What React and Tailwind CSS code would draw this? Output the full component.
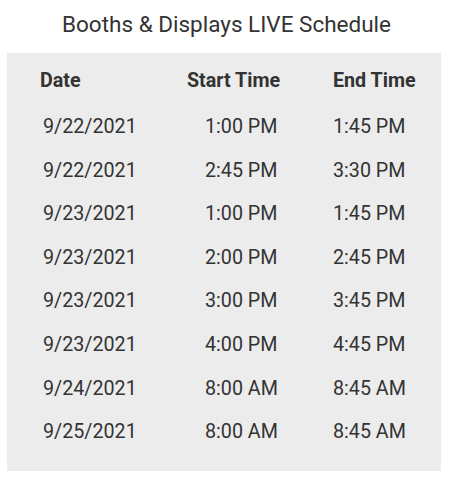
const rows = [
  ['9/22/2021', '1:00 PM', '1:45 PM'],
  ['9/22/2021', '2:45 PM', '3:30 PM'],
  ['9/23/2021', '1:00 PM', '1:45 PM'],
  ['9/23/2021', '2:00 PM', '2:45 PM'],
  ['9/23/2021', '3:00 PM', '3:45 PM'],
  ['9/23/2021', '4:00 PM', '4:45 PM'],
  ['9/24/2021', '8:00 AM', '8:45 AM'],
  ['9/25/2021', '8:00 AM', '8:45 AM'],
];

export default function App() {
  return (
    <div className="w-[453px] h-[489px] bg-white text-[#333] font-['Roboto',sans-serif]">
      <h1 className="h-[53px] pt-[9px] text-center text-[22.5px] leading-[30px] font-normal">
        Booths &amp; Displays LIVE Schedule
      </h1>

      <div className="ml-[7px] w-[434px] h-[418px] bg-[#ececec] pt-[6px]">
        {/* header */}
        <div className="flex h-[44px] items-center text-[19.7px] font-bold">
          <div className="w-[173px] pl-[33px]">Date</div>
          <div className="w-[153px] pl-[7px]">Start Time</div>
          <div className="flex-1">End Time</div>
        </div>

        <div className="mt-[2px]">
          {rows.map((r, i) => (
            <div key={i} className="flex h-[43.6px] items-center text-[19.7px]">
              <div className="w-[173px] pl-[36px]">{r[0]}</div>
              <div className="w-[153px] pl-[25px]">{r[1]}</div>
              <div className="flex-1">{r[2]}</div>
            </div>
          ))}
        </div>
      </div>
    </div>
  );
}
